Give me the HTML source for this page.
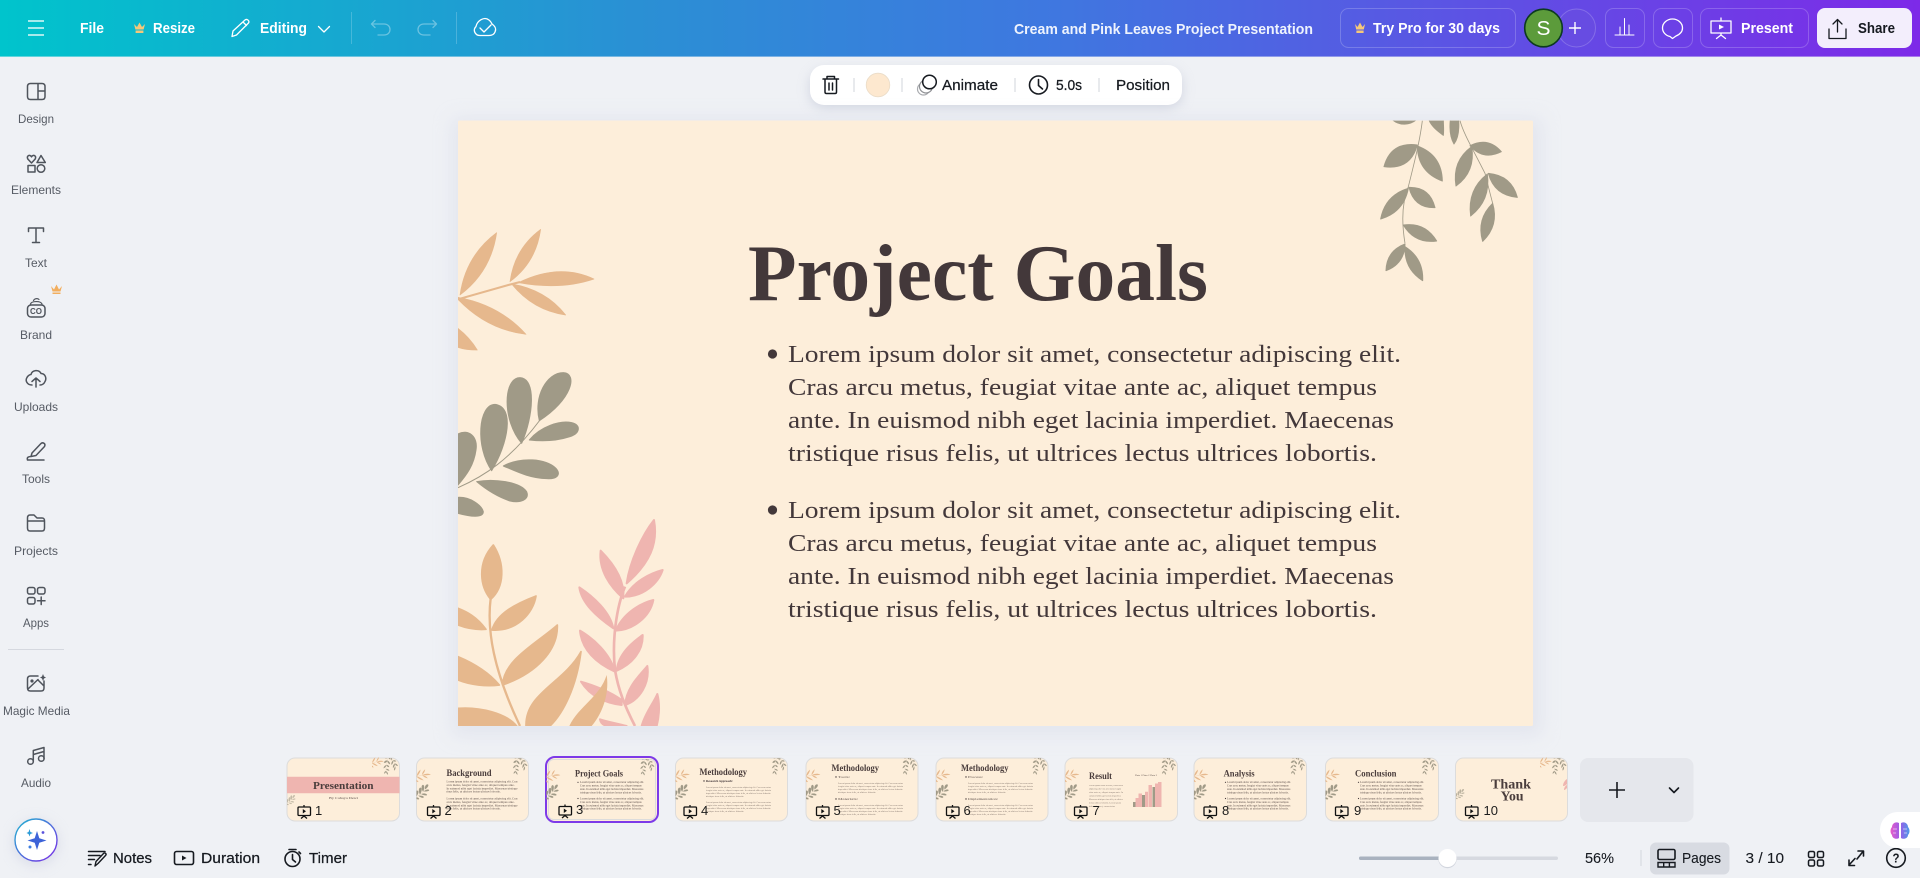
<!DOCTYPE html>
<html lang="en"><head><meta charset="utf-8"><title>Cream and Pink Leaves Project Presentation</title>
<style>
html,body{margin:0;padding:0;width:1920px;height:878px;overflow:hidden;background:#eff1f5}
svg{display:block;position:absolute;left:0;top:0}
text{font-family:"Liberation Sans",sans-serif}
.w{fill:#fff;font-size:15px;font-weight:700}
.side{fill:#565b64;font-size:12px}
.d{fill:#161a20;font-size:15px;stroke:#161a20;stroke-width:.25}
.serif{font-family:"Liberation Serif",serif;fill:#43383a}
.tt{font-family:"Liberation Serif",serif;fill:#4a3d3c;font-weight:700;font-size:9px}
.m{font-family:"Liberation Serif",serif;fill:#5f514c;font-size:2.9px}
.s{fill:none;stroke:#4f545c;stroke-width:1.5;stroke-linecap:round;stroke-linejoin:round}
.i{fill:none;stroke:#161a20;stroke-width:1.6;stroke-linecap:round;stroke-linejoin:round}
.h{fill:none;stroke:#fff;stroke-width:1.3;stroke-linecap:round;stroke-linejoin:round}
.n{fill:#1c1c1c;font-size:13px}
</style></head><body>
<svg width="1920" height="878" viewBox="0 0 1920 878" xmlns="http://www.w3.org/2000/svg">
<defs>
<linearGradient id="hg" x1="0" x2="1" y1="0" y2="0"><stop offset="0" stop-color="#00c4cc"/><stop offset=".33" stop-color="#2a90d4"/><stop offset=".55" stop-color="#3f77e0"/><stop offset="1" stop-color="#7d2ae8"/></linearGradient>
<linearGradient id="mg" x1="0" x2="1" y1="0" y2="1"><stop offset="0" stop-color="#1fb6d0"/><stop offset="1" stop-color="#7d2ae8"/></linearGradient>
<linearGradient id="bg" x1="0" x2="1" y1="0" y2="0"><stop offset="0" stop-color="#e85cc8"/><stop offset=".5" stop-color="#9a5ce8"/><stop offset="1" stop-color="#4d9be8"/></linearGradient>
<filter id="sh" x="-10%" y="-10%" width="120%" height="120%"><feGaussianBlur stdDeviation="9"/></filter>
<filter id="sh2" x="-20%" y="-50%" width="140%" height="220%"><feGaussianBlur stdDeviation="6"/></filter>
<clipPath id="cz"><rect x="24" y="0" width="1200" height="1548"/></clipPath>
<clipPath id="ct"><rect x="0" y="32" width="600" height="600"/></clipPath>
<g id="o1" transform="translate(450 210) scale(.33333)" fill="#e6b88d" stroke="#e6b88d" stroke-width="2" stroke-linejoin="round" clip-path="url(#cz)">
<path d="M24 268L175 225L210 216" fill="none" stroke-width="6"/>
<path d="M30 255C41 178 77 115 140 68C129 145 93 208 30 255Z"/>
<path d="M180 215C189 150 219 97 272 58C263 123 233 176 180 215Z"/>
<path d="M205 218C282 180 358 172 432 207C358 232 282 232 205 218Z"/>
<path d="M185 222C252 233 307 264 347 315C283 306 228 275 185 222Z"/>
<path d="M24 262C106 277 174 313 228 373C148 363 80 327 24 268Z"/>
<path d="M24 355C50 375 70 400 82 420C60 420 40 418 24 412Z"/>
</g>
<g id="g1" transform="translate(450 210) scale(.33333)" fill="#a09a87" stroke="#a09a87" stroke-width="3" stroke-linejoin="round" clip-path="url(#cz)">
<path d="M24 833C100 800 180 750 270 630" fill="none"/>
<path d="M268 632C250 560 290 488 340 488C385 490 365 570 268 632Z"/>
<path d="M215 700C155 630 160 503 210 503C260 505 250 620 215 700Z"/>
<path d="M125 782C75 710 85 583 135 583C195 590 175 700 125 782Z"/>
<path d="M24 825V672C55 655 85 680 78 720C72 765 50 795 24 825Z"/>
<path d="M238 690C270 650 330 630 365 638C395 645 390 670 360 680C320 693 280 695 238 690Z"/>
<path d="M160 768C210 740 290 745 318 775C335 795 320 808 290 806C240 805 200 785 160 768Z"/>
<path d="M80 815C130 805 210 815 230 845C240 870 210 880 180 873C140 860 110 840 80 815Z"/>
<path d="M24 862C60 860 95 885 100 905C100 925 60 920 24 910Z"/>
</g>
<g id="tr" transform="translate(1360 110) scale(.33333)" fill="#a09a87" stroke="#a09a87" stroke-width="3" stroke-linejoin="round" clip-path="url(#ct)">
<g fill="none" stroke-width="2.5"><path d="M187 32C180 90 165 150 145 230C125 280 125 340 135 400"/><path d="M300 32C310 70 340 120 375 190C385 230 390 250 398 280"/></g>
<path d="M98 30C120 48 150 45 168 30Z"/>
<path d="M207 30C215 50 235 65 250 76C252 60 250 45 250 30Z"/>
<path d="M271 30C268 60 272 85 282 102C295 85 298 60 296 30Z"/>
<path d="M172 105C120 98 86 119 72 170C124 177 158 156 172 105Z"/>
<path d="M172 108C221 126 246 161 247 213C198 195 173 160 172 108Z"/>
<path d="M145 235C98 249 71 279 62 327C109 313 136 283 145 235Z"/>
<path d="M147 232C189 231 215 252 225 293C183 294 157 273 147 232Z"/>
<path d="M130 345C173 339 207 355 230 393C187 399 153 383 130 345Z"/>
<path d="M135 402C98 416 79 442 78 482C115 468 134 442 135 402Z"/>
<path d="M135 410C173 434 190 468 188 512C150 488 133 454 135 410Z"/>
<path d="M330 107C366 89 398 95 424 125C388 143 356 137 330 107Z"/>
<path d="M335 110C295 139 280 179 288 228C328 199 343 159 335 110Z"/>
<path d="M382 192C341 224 325 266 332 318C373 286 389 244 382 192Z"/>
<path d="M385 190C431 194 460 218 472 262C426 258 397 234 385 190Z"/>
<path d="M398 280C365 312 355 350 368 394C401 362 411 324 398 280Z"/>
</g>
<g id="pp"><rect x="1" y="2.5" width="12.5" height="8.5" rx="1" fill="none" stroke="#111" stroke-width="1.3"/><path d="M7 .5V2.5M7 11V12M7 11.5L4 14M7 11.5L10 14" fill="none" stroke="#111" stroke-width="1.3"/><path d="M5.8 4.5L9 6.7L5.8 9Z" fill="#111"/></g>
</defs>

<rect width="1920" height="878" fill="#eff1f5"/>
<rect width="1920" height="56.6" fill="url(#hg)"/>

<!-- top bar left -->
<path d="M28 21H44M28 28H44M28 35H44" stroke="#dff7f7" stroke-width="1.5" fill="none"/>
<text class="w" x="80" y="33" textLength="24" lengthAdjust="spacingAndGlyphs">File</text>
<path d="M134 24L137 27L139.5 22.5L142 27L145 24L143.6 29.5H135.4Z M135.6 30.5H143.4V33H135.6Z" fill="#f5c87a"/>
<text class="w" x="153" y="33" textLength="42" lengthAdjust="spacingAndGlyphs">Resize</text>
<path class="h" d="M232 36.5L233 31L245 20C246.5 18.5 250 20.5 248.5 23L236.5 35ZM243 22L246.5 25.5"/>
<text class="w" x="260" y="33" textLength="47" lengthAdjust="spacingAndGlyphs">Editing</text>
<path class="h" d="M318.5 26.5L324 32L329.5 26.5"/>
<path d="M351.5 12V44M456.5 12V44" stroke="#fff" stroke-opacity=".2"/>
<path class="h" opacity=".35" d="M375 20.5L371.5 24L375 27.5M372 24H384C392 24 392 35 384 35H378"/>
<path class="h" opacity=".35" d="M433 20.5L436.5 24L433 27.5M436 24H424C416 24 416 35 424 35H430"/>
<path class="h" d="M480 35.5C475 35.5 472.5 30 476 26.5C477 21 484 16 489 20C491 21.5 491.5 23 492 24C495 26 496.5 29 495 32C494 34.5 492 35.5 489 35.5ZM480 28L484 32L491 25"/>

<!-- top bar right -->
<text class="w" x="1014" y="34" textLength="299" lengthAdjust="spacingAndGlyphs" style="font-size:15px;fill:#eef3fd">Cream and Pink Leaves Project Presentation</text>
<rect x="1340.5" y="8.5" width="175" height="39" rx="8" fill="none" stroke="#fff" stroke-opacity=".2"/>
<path d="M1355 24L1357.5 27L1360 22.5L1362.5 27L1365 24L1363.8 29.5H1356.2Z M1356.4 30.5H1363.6V33H1356.4Z" fill="#f5c87a"/>
<text class="w" x="1373" y="33" textLength="127" lengthAdjust="spacingAndGlyphs">Try Pro for 30 days</text>
<circle cx="1576.5" cy="28" r="19" fill="#6a4fe0" fill-opacity=".5" stroke="#fff" stroke-opacity=".2"/>
<path d="M1575 22V34M1569 28H1581" stroke="#fff" stroke-width="1.4"/>
<circle cx="1543.5" cy="28" r="18.8" fill="#5c9b3b" stroke="#0c3a20" stroke-width="1.6"/>
<text x="1536.5" y="35" style="font-size:20px;fill:#fff" textLength="14" lengthAdjust="spacingAndGlyphs">S</text>
<rect x="1605.5" y="8.5" width="39" height="39" rx="8" fill="none" stroke="#fff" stroke-opacity=".2"/>
<path class="h" style="stroke-width:1" d="M1615 35H1634M1620 35V27M1624.5 35V18.5M1629 35V25"/>
<rect x="1653.5" y="8.5" width="39" height="39" rx="8" fill="none" stroke="#fff" stroke-opacity=".2"/>
<path class="h" d="M1672.5 19C1678 19 1682.5 23 1682.5 28C1682.5 32 1679.5 34.5 1676 36L1672.5 38.5L1670 36.5C1665.5 35.5 1662.5 32 1662.5 28C1662.5 23 1667 19 1672.5 19Z"/>
<rect x="1700.5" y="8.5" width="108" height="39" rx="8" fill="none" stroke="#fff" stroke-opacity=".2"/>
<path class="h" d="M1711 21H1731V33H1711ZM1721 18V21M1721 33V35M1721 35L1716.5 38.5M1721 35L1725.5 38.5"/>
<path d="M1719 24.5L1724 27L1719 29.5Z" fill="#fff"/>
<text class="w" x="1741" y="33" textLength="52" lengthAdjust="spacingAndGlyphs">Present</text>
<rect x="1817" y="8" width="95" height="40" rx="8" fill="#f3eefc"/>
<path class="i" style="stroke-width:1.3" d="M1829 29V38.5H1846V29M1837.5 19.5V32M1833 24L1837.5 19.5L1842 24"/>
<text x="1858" y="33" textLength="37" lengthAdjust="spacingAndGlyphs" style="font-size:15px;font-weight:700;fill:#161a20">Share</text>

<!-- sidebar -->
<path class="s" d="M30.5 83.5H42C44 83.5 45 84.5 45 86.5V96.5C45 98.5 44 99.5 42 99.5H30.5C28.5 99.5 27.5 98.5 27.5 96.5V86.5C27.5 84.5 28.5 83.5 30.5 83.5ZM38 83.5V99.5M38 91H45"/>
<text class="side" x="18" y="123" textLength="36" lengthAdjust="spacingAndGlyphs">Design</text>
<path class="s" d="M31.5 163L27.8 159C26.5 156.5 28.5 155 30 155.5C30.7 155.7 31.2 156.2 31.5 156.8C31.8 156.2 32.3 155.7 33 155.5C34.5 155 36.5 156.5 35.2 159ZM41 155.5L45.3 162.5H37ZM28 165.5H35V172H28Z"/><circle class="s" cx="41" cy="168.5" r="3.8"/>
<text class="side" x="11" y="194" textLength="50" lengthAdjust="spacingAndGlyphs">Elements</text>
<path class="s" d="M28.5 231.5V228H43.5V231.5M36 228V242.5M32.5 242.5H39.5"/>
<text class="side" x="25" y="267" textLength="22" lengthAdjust="spacingAndGlyphs">Text</text>
<rect class="s" x="27.5" y="305" width="17.5" height="12" rx="3.5"/>
<path class="s" style="stroke-width:1.2" d="M30.5 304C31.5 301 40.5 300.5 42 304M33.5 300.5C34.5 298.5 37.5 298 39 299.5"/>
<text x="30" y="314" style="font-size:8px;font-weight:700;fill:#4f545c" textLength="12" lengthAdjust="spacingAndGlyphs">CO</text>
<path d="M51 286L54 289.5L56.5 284.5L59 289.5L62 286L60.5 291.5H52.5ZM52.5 292.5H60.5V294H52.5Z" fill="#f2ae5e"/>
<text class="side" x="20" y="339" textLength="32" lengthAdjust="spacingAndGlyphs">Brand</text>
<path class="s" d="M32 385C27 385 25 380.5 27 377.5C28 375.5 30 374.5 31 374.5C32 370 39 369 41 373.5C45 373.5 47 378 45 381.5C44 384 42 385 40 385M36 387V378M32 381.5L36 378L40 381.5"/>
<text class="side" x="14" y="411" textLength="44" lengthAdjust="spacingAndGlyphs">Uploads</text>
<path class="s" d="M32 453L40.5 444C42.5 441.5 46 443.5 44.5 446.5L36 455.5L31 456.5ZM27.5 460C26.5 457 29 456.5 31 456.5M27.5 460H44"/>
<text class="side" x="22" y="483" textLength="28" lengthAdjust="spacingAndGlyphs">Tools</text>
<path class="s" d="M27.5 518C27.5 516 28.5 515 30 515H34L37 518H42C44 518 44.5 519 44.5 521V528C44.5 530 43.5 531 42 531H30C28.5 531 27.5 530 27.5 528ZM27.5 521H44.5"/>
<text class="side" x="14" y="555" textLength="44" lengthAdjust="spacingAndGlyphs">Projects</text>
<rect class="s" x="27.5" y="587.5" width="7.5" height="6.5" rx="2"/><rect class="s" x="37.5" y="587.5" width="7.5" height="6.5" rx="2"/><rect class="s" x="27.5" y="597.5" width="7.5" height="6.5" rx="2"/>
<path class="s" d="M41.2 597V604.5M37.5 600.8H45"/>
<text class="side" x="23" y="627" textLength="26" lengthAdjust="spacingAndGlyphs">Apps</text>
<rect x="8" y="649" width="56" height="1" fill="#d5d8df"/>
<path class="s" d="M38 676H30.5C28.5 676 27.5 677 27.5 679V688C27.5 690 28.5 691 30.5 691H41C43 691 44 690 44 688V681M28 689L38 679.5M38 680L44 686"/>
<circle cx="32" cy="681" r="1.6" fill="#4f545c"/>
<path d="M43 674L44 676.5L46 677.5L44 678.5L43 681L42 678.5L40 677.5L42 676.5Z" fill="#4f545c"/>
<text class="side" x="3" y="715" textLength="67" lengthAdjust="spacingAndGlyphs">Magic Media</text>
<circle class="s" cx="30.5" cy="761.5" r="2.8"/><circle class="s" cx="41.3" cy="758.5" r="2.8"/>
<path class="s" d="M33.3 761.5V750.5L44 747.5V758.5M33.3 754.5L44 751.5"/>
<text class="side" x="21" y="787" textLength="30" lengthAdjust="spacingAndGlyphs">Audio</text>
<circle cx="36" cy="843" r="23" fill="#c9cde0" opacity=".5" filter="url(#sh2)"/>
<circle cx="36" cy="840" r="21" fill="#fff" stroke="url(#mg)" stroke-width="1.4"/>
<path d="M37 831L39.3 838.2L46.5 840.5L39.3 842.8L37 850L34.7 842.8L27.5 840.5L34.7 838.2Z" fill="#3d63d8"/>
<path d="M29.5 829L30.4 832L33 833L30.4 834L29.5 836.5L28.6 834L26.5 833L28.6 832Z" fill="#2b9ad6"/>
<circle cx="43" cy="832.5" r="1.4" fill="#5a52dc"/><circle cx="30" cy="847" r="1.5" fill="#3c7de0"/>

<!-- bottom left -->
<path class="i" style="stroke-width:1.5" d="M88.5 851.5H105M88.5 855.5H100M88.5 859.5H94.5M88.5 864.5H91"/>
<path class="i" style="stroke-width:1.4" d="M95 866L96 861.5L103.5 853.5C105 852 107 854 105.5 855.5L98 863.5Z"/>
<text class="d" x="113" y="863" textLength="39" lengthAdjust="spacingAndGlyphs">Notes</text>
<rect class="i" x="174.5" y="851.5" width="19" height="13" rx="2"/><path d="M182 855.5L186.5 858L182 860.5Z" fill="#161a20"/>
<text class="d" x="201" y="863" textLength="59" lengthAdjust="spacingAndGlyphs">Duration</text>
<circle class="i" cx="292.5" cy="859" r="7.5"/><path class="i" d="M289 849.5H296M292.5 854.5V859.5L295.5 862M299 852L300.5 853.5"/>
<text class="d" x="309" y="863" textLength="38" lengthAdjust="spacingAndGlyphs">Timer</text>

<!-- floating toolbar -->
<rect x="810" y="70" width="372" height="38" rx="14" fill="#b8bdcf" opacity=".55" filter="url(#sh2)"/>
<rect x="810" y="65" width="372" height="40" rx="14" fill="#fff"/>
<path class="i" style="stroke-width:1.5" d="M823 79H838.5M827 79V76.5H834.5V79M825 79V92C825 93 825.7 93.5 826.5 93.5H835C835.8 93.5 836.5 93 836.5 92V79M829 83V90M832.5 83V90"/>
<path d="M854 78V92M902 78V92M1015 78V92M1099 78V92" stroke="#d9dbe1" stroke-width="1.2"/>
<circle cx="878" cy="85" r="11.8" fill="#fde8cf" stroke="#eadcc8" stroke-width=".8"/>
<circle cx="923.5" cy="89" r="6" fill="none" stroke="#a9abaf" stroke-width="1.2"/><circle cx="926" cy="86.5" r="6.5" fill="#fff" stroke="#8f9195" stroke-width="1.2"/>
<circle cx="929.5" cy="82" r="6.8" fill="#fff" stroke="#161a20" stroke-width="1.5"/>
<text class="d" x="942" y="90" textLength="56" lengthAdjust="spacingAndGlyphs">Animate</text>
<circle class="i" cx="1038.5" cy="85" r="9"/><path class="i" d="M1038.5 79.5V85.5L1042.5 89"/>
<text class="d" x="1056" y="90" textLength="26" lengthAdjust="spacingAndGlyphs">5.0s</text>
<text class="d" x="1116" y="90" textLength="54" lengthAdjust="spacingAndGlyphs">Position</text>

<!-- main slide -->
<rect x="452" y="118" width="1090" height="618" fill="#d8dbe8" opacity=".5" filter="url(#sh)"/>
<rect x="458" y="120.5" width="1075" height="605.5" rx="1.5" fill="#fdeeda"/>
<use href="#o1"/><use href="#g1"/><use href="#tr"/>
<g transform="translate(450 210) scale(.33333)" clip-path="url(#cz)">
<g fill="#e6b88d" stroke="#e6b88d" stroke-width="5" stroke-linejoin="round">
<path d="M122 1165C110 1260 130 1380 210 1548" fill="none" stroke-width="7"/>
<path d="M122 1168C90 1130 80 1060 130 1005C165 1060 165 1130 122 1168Z"/>
<path d="M108 1258C80 1220 50 1205 24 1195V1245C50 1255 80 1260 108 1258Z"/>
<path d="M126 1260C140 1210 200 1180 258 1158C250 1210 200 1265 126 1260Z"/>
<path d="M158 1425C160 1350 260 1300 322 1245C325 1320 260 1390 158 1425Z"/>
<path d="M148 1425C110 1380 60 1355 24 1340V1410C60 1425 110 1430 148 1425Z"/>
<path d="M228 1548C225 1450 340 1420 393 1325C380 1430 340 1510 300 1548Z"/>
<path d="M24 1495C90 1490 170 1510 200 1548H24Z"/>
</g>
<g fill="#efb5b0" stroke="#efb5b0" stroke-width="6" stroke-linejoin="round">
<path d="M525 1130C500 1190 485 1290 495 1380C505 1440 525 1490 555 1548" fill="none" stroke-width="8"/>
<path d="M530 1120C540 1050 580 970 612 930C625 1000 600 1060 530 1120Z"/>
<path d="M525 1160C550 1115 600 1090 638 1080C625 1120 580 1160 525 1160Z"/>
<path d="M520 1165C480 1130 445 1080 452 1022C490 1060 525 1110 520 1165Z"/>
<path d="M497 1262C520 1210 570 1180 610 1170C600 1220 550 1260 497 1262Z"/>
<path d="M490 1255C440 1220 395 1180 388 1132C430 1160 480 1205 490 1255Z"/>
<path d="M500 1382C505 1330 550 1295 578 1275C580 1320 550 1360 500 1382Z"/>
<path d="M495 1385C440 1360 395 1320 390 1262C430 1285 480 1330 495 1385Z"/>
<path d="M525 1485C530 1430 570 1395 592 1368C600 1420 570 1470 525 1485Z"/>
<path d="M515 1485C470 1480 420 1460 393 1415C430 1425 480 1445 515 1470Z"/>
<path d="M575 1548C585 1510 610 1480 622 1452C632 1490 625 1530 620 1548Z"/>
<path d="M530 1548C500 1540 470 1535 450 1528C452 1540 460 1545 470 1548Z"/>
</g>
<path d="M358 1548C385 1490 450 1460 470 1395C480 1460 450 1520 425 1548Z" fill="#e6b88d"/>
</g>
<text class="serif" x="748" y="300" textLength="460" lengthAdjust="spacingAndGlyphs" style="font-size:81px;font-weight:700">Project Goals</text>
<g class="serif" style="font-size:24px">
<circle cx="772.5" cy="354" r="4.6" fill="#43383a"/>
<text class="serif" x="788" y="362" textLength="613" lengthAdjust="spacingAndGlyphs">Lorem ipsum dolor sit amet, consectetur adipiscing elit.</text>
<text class="serif" x="788" y="395" textLength="589" lengthAdjust="spacingAndGlyphs">Cras arcu metus, feugiat vitae ante ac, aliquet tempus</text>
<text class="serif" x="788" y="428" textLength="606" lengthAdjust="spacingAndGlyphs">ante. In euismod nibh eget lacinia imperdiet. Maecenas</text>
<text class="serif" x="788" y="461" textLength="589" lengthAdjust="spacingAndGlyphs">tristique risus felis, ut ultrices lectus ultrices lobortis.</text>
<circle cx="772.5" cy="510" r="4.6" fill="#43383a"/>
<text class="serif" x="788" y="518" textLength="613" lengthAdjust="spacingAndGlyphs">Lorem ipsum dolor sit amet, consectetur adipiscing elit.</text>
<text class="serif" x="788" y="551" textLength="589" lengthAdjust="spacingAndGlyphs">Cras arcu metus, feugiat vitae ante ac, aliquet tempus</text>
<text class="serif" x="788" y="584" textLength="606" lengthAdjust="spacingAndGlyphs">ante. In euismod nibh eget lacinia imperdiet. Maecenas</text>
<text class="serif" x="788" y="617" textLength="589" lengthAdjust="spacingAndGlyphs">tristique risus felis, ut ultrices lectus ultrices lobortis.</text>
</g>

<!-- thumb 1 -->
<rect x="287" y="758" width="112.5" height="63" rx="8" fill="#fdeeda" stroke="#dcdcdc"/>
<path d="M287 776.7H399.5V793.3H287Z" fill="#efb5b0"/>
<g transform="translate(287 758) scale(.10465) translate(-458 -121)"><use href="#tr"/></g>
<g transform="translate(372 757) scale(.085) translate(-458 -228)"><use href="#o1"/></g>
<g transform="translate(287 795) scale(.07) translate(-458 -372)" opacity=".6"><use href="#g1"/></g>
<text class="tt" x="313" y="789" textLength="60.5" lengthAdjust="spacingAndGlyphs" style="font-size:11px">Presentation</text>
<text class="m" x="329" y="799" textLength="29" lengthAdjust="spacingAndGlyphs">By Cahaya Dewi</text>
<use href="#pp" x="297" y="804.5"/><text class="n" x="315" y="815">1</text>

<!-- thumb 2 -->
<rect x="416.5" y="758" width="112" height="63" rx="8" fill="#fdeeda" stroke="#dcdcdc"/>
<g transform="translate(416.5 758) scale(.10465) translate(-458 -121)"><use href="#o1"/><use href="#g1"/><use href="#tr"/></g>
<text class="tt" x="446.5" y="776" textLength="45" lengthAdjust="spacingAndGlyphs">Background</text>
<text class="m" x="446.5" y="782.5" textLength="71" lengthAdjust="spacingAndGlyphs">Lorem ipsum dolor sit amet, consectetur adipiscing elit. Cras</text>
<text class="m" x="446.5" y="785.9" textLength="68" lengthAdjust="spacingAndGlyphs">arcu metus, feugiat vitae ante ac, aliquet tempus ante.</text>
<text class="m" x="446.5" y="789.3" textLength="71" lengthAdjust="spacingAndGlyphs">In euismod nibh eget lacinia imperdiet. Maecenas tristique</text>
<text class="m" x="446.5" y="792.7" textLength="54" lengthAdjust="spacingAndGlyphs">risus felis, ut ultrices lectus ultrices lobortis.</text>
<text class="m" x="446.5" y="799.5" textLength="71" lengthAdjust="spacingAndGlyphs">Lorem ipsum dolor sit amet, consectetur adipiscing elit. Cras</text>
<text class="m" x="446.5" y="802.9" textLength="68" lengthAdjust="spacingAndGlyphs">arcu metus, feugiat vitae ante ac, aliquet tempus ante.</text>
<text class="m" x="446.5" y="806.3" textLength="71" lengthAdjust="spacingAndGlyphs">In euismod nibh eget lacinia imperdiet. Maecenas tristique</text>
<text class="m" x="446.5" y="809.7" textLength="54" lengthAdjust="spacingAndGlyphs">risus felis, ut ultrices lectus ultrices lobortis.</text>
<use href="#pp" x="426.5" y="804.5"/><text class="n" x="444.5" y="815">2</text>

<!-- thumb 3 selected -->
<rect x="546" y="757" width="112" height="65" rx="9" fill="#fdeeda" stroke="#7d3ae8" stroke-width="2"/>
<rect x="548.5" y="759.5" width="107" height="60" rx="5" fill="#fdeeda" stroke="#dcdcdc"/>
<g transform="translate(546.3 759) scale(.102) translate(-458 -121)"><use href="#o1"/><use href="#g1"/><use href="#tr"/></g>
<text class="tt" x="575" y="776.7" textLength="48" lengthAdjust="spacingAndGlyphs">Project Goals</text>
<circle cx="578" cy="782.3" r=".6" fill="#43383a"/><circle cx="578" cy="798.5" r=".6" fill="#43383a"/>
<text class="m" x="580" y="783.2" textLength="64" lengthAdjust="spacingAndGlyphs">Lorem ipsum dolor sit amet, consectetur adipiscing elit.</text>
<text class="m" x="580" y="786.6" textLength="61.6" lengthAdjust="spacingAndGlyphs">Cras arcu metus, feugiat vitae ante ac, aliquet tempus</text>
<text class="m" x="580" y="790" textLength="63.4" lengthAdjust="spacingAndGlyphs">ante. In euismod nibh eget lacinia imperdiet. Maecenas</text>
<text class="m" x="580" y="793.4" textLength="61.6" lengthAdjust="spacingAndGlyphs">tristique risus felis, ut ultrices lectus ultrices lobortis.</text>
<text class="m" x="580" y="799.5" textLength="64" lengthAdjust="spacingAndGlyphs">Lorem ipsum dolor sit amet, consectetur adipiscing elit.</text>
<text class="m" x="580" y="802.9" textLength="61.6" lengthAdjust="spacingAndGlyphs">Cras arcu metus, feugiat vitae ante ac, aliquet tempus</text>
<text class="m" x="580" y="806.3" textLength="63.4" lengthAdjust="spacingAndGlyphs">ante. In euismod nibh eget lacinia imperdiet. Maecenas</text>
<text class="m" x="580" y="809.7" textLength="61.6" lengthAdjust="spacingAndGlyphs">tristique risus felis, ut ultrices lectus ultrices lobortis.</text>
<use href="#pp" x="558" y="804"/><text class="n" x="576" y="814">3</text>

<!-- thumb 4 -->
<rect x="675.5" y="758" width="112" height="63" rx="8" fill="#fdeeda" stroke="#dcdcdc"/>
<g transform="translate(675.5 758) scale(.10465) translate(-458 -121)"><use href="#o1"/><use href="#g1"/><use href="#tr"/></g>
<text class="tt" x="699.5" y="775" textLength="47.5" lengthAdjust="spacingAndGlyphs">Methodology</text>
<circle cx="704" cy="781" r=".7" fill="#43383a"/>
<text class="m" x="706" y="782" textLength="27" lengthAdjust="spacingAndGlyphs" style="font-weight:700;fill:#43383a">Research Approach:</text>
<g style="opacity:.75">
<text class="m" x="706" y="788" textLength="65" lengthAdjust="spacingAndGlyphs" style="font-size:2px">Lorem ipsum dolor sit amet, consectetur adipiscing elit. Cras arcu metus</text>
<text class="m" x="706" y="791" textLength="65" lengthAdjust="spacingAndGlyphs" style="font-size:2px">feugiat vitae ante ac, aliquet tempus ante. In euismod nibh eget lacinia</text>
<text class="m" x="706" y="794" textLength="65" lengthAdjust="spacingAndGlyphs" style="font-size:2px">imperdiet. Maecenas tristique risus felis, ut ultrices lectus lobortis.</text>
<text class="m" x="706" y="797" textLength="38" lengthAdjust="spacingAndGlyphs" style="font-size:2px">tristique risus felis, ut ultrices lobortis.</text>
<text class="m" x="706" y="803" textLength="65" lengthAdjust="spacingAndGlyphs" style="font-size:2px">Lorem ipsum dolor sit amet, consectetur adipiscing elit. Cras arcu metus</text>
<text class="m" x="706" y="806" textLength="65" lengthAdjust="spacingAndGlyphs" style="font-size:2px">feugiat vitae ante ac, aliquet tempus ante. In euismod nibh eget lacinia</text>
<text class="m" x="706" y="809" textLength="65" lengthAdjust="spacingAndGlyphs" style="font-size:2px">imperdiet. Maecenas tristique risus felis, ut ultrices lectus lobortis.</text>
<text class="m" x="706" y="812" textLength="38" lengthAdjust="spacingAndGlyphs" style="font-size:2px">tristique risus felis, ut ultrices lobortis.</text>
</g>
<use href="#pp" x="683" y="804.5"/><text class="n" x="701" y="815">4</text>

<!-- thumb 5 -->
<rect x="806" y="758" width="112" height="63" rx="8" fill="#fdeeda" stroke="#dcdcdc"/>
<g transform="translate(806 758) scale(.10465) translate(-458 -121)"><use href="#o1"/><use href="#g1"/><use href="#tr"/></g>
<text class="tt" x="831.5" y="771" textLength="47.5" lengthAdjust="spacingAndGlyphs">Methodology</text>
<circle cx="836" cy="777" r=".7" fill="#43383a"/>
<text class="m" x="838" y="778" textLength="12" lengthAdjust="spacingAndGlyphs">Tools:</text>
<g style="opacity:.75">
<text class="m" x="838" y="784" textLength="65" lengthAdjust="spacingAndGlyphs" style="font-size:2px">Lorem ipsum dolor sit amet, consectetur adipiscing elit. Cras arcu metus</text>
<text class="m" x="838" y="787" textLength="65" lengthAdjust="spacingAndGlyphs" style="font-size:2px">feugiat vitae ante ac, aliquet tempus ante. In euismod nibh eget lacinia</text>
<text class="m" x="838" y="790" textLength="65" lengthAdjust="spacingAndGlyphs" style="font-size:2px">imperdiet. Maecenas tristique risus felis, ut ultrices lectus lobortis.</text>
<text class="m" x="838" y="793" textLength="38" lengthAdjust="spacingAndGlyphs" style="font-size:2px">tristique risus felis, ut ultrices lobortis.</text>
</g>
<circle cx="836" cy="799" r=".7" fill="#43383a"/>
<text class="m" x="838" y="800" textLength="20" lengthAdjust="spacingAndGlyphs">Materials:</text>
<g style="opacity:.75">
<text class="m" x="838" y="806" textLength="65" lengthAdjust="spacingAndGlyphs" style="font-size:2px">Lorem ipsum dolor sit amet, consectetur adipiscing elit. Cras arcu metus</text>
<text class="m" x="838" y="809" textLength="65" lengthAdjust="spacingAndGlyphs" style="font-size:2px">feugiat vitae ante ac, aliquet tempus ante. In euismod nibh eget lacinia</text>
<text class="m" x="838" y="812" textLength="65" lengthAdjust="spacingAndGlyphs" style="font-size:2px">imperdiet. Maecenas tristique risus felis, ut ultrices lectus lobortis.</text>
<text class="m" x="838" y="815" textLength="38" lengthAdjust="spacingAndGlyphs" style="font-size:2px">tristique risus felis, ut ultrices lobortis.</text>
</g>
<use href="#pp" x="815.5" y="804.5"/><text class="n" x="833.5" y="815">5</text>

<!-- thumb 6 -->
<rect x="936" y="758" width="112" height="63" rx="8" fill="#fdeeda" stroke="#dcdcdc"/>
<g transform="translate(936 758) scale(.10465) translate(-458 -121)"><use href="#o1"/><use href="#g1"/><use href="#tr"/></g>
<text class="tt" x="961" y="771" textLength="47.5" lengthAdjust="spacingAndGlyphs">Methodology</text>
<circle cx="966" cy="777" r=".7" fill="#43383a"/>
<text class="m" x="968" y="778" textLength="15" lengthAdjust="spacingAndGlyphs">Process:</text>
<g style="opacity:.75">
<text class="m" x="968" y="784" textLength="65" lengthAdjust="spacingAndGlyphs" style="font-size:2px">Lorem ipsum dolor sit amet, consectetur adipiscing elit. Cras arcu metus</text>
<text class="m" x="968" y="787" textLength="65" lengthAdjust="spacingAndGlyphs" style="font-size:2px">feugiat vitae ante ac, aliquet tempus ante. In euismod nibh eget lacinia</text>
<text class="m" x="968" y="790" textLength="65" lengthAdjust="spacingAndGlyphs" style="font-size:2px">imperdiet. Maecenas tristique risus felis, ut ultrices lectus lobortis.</text>
<text class="m" x="968" y="793" textLength="38" lengthAdjust="spacingAndGlyphs" style="font-size:2px">tristique risus felis, ut ultrices lobortis.</text>
</g>
<circle cx="966" cy="799" r=".7" fill="#43383a"/>
<text class="m" x="968" y="800" textLength="30" lengthAdjust="spacingAndGlyphs">Implementation:</text>
<g style="opacity:.75">
<text class="m" x="968" y="806" textLength="65" lengthAdjust="spacingAndGlyphs" style="font-size:2px">Lorem ipsum dolor sit amet, consectetur adipiscing elit. Cras arcu metus</text>
<text class="m" x="968" y="809" textLength="65" lengthAdjust="spacingAndGlyphs" style="font-size:2px">feugiat vitae ante ac, aliquet tempus ante. In euismod nibh eget lacinia</text>
<text class="m" x="968" y="812" textLength="65" lengthAdjust="spacingAndGlyphs" style="font-size:2px">imperdiet. Maecenas tristique risus felis, ut ultrices lectus lobortis.</text>
<text class="m" x="968" y="815" textLength="38" lengthAdjust="spacingAndGlyphs" style="font-size:2px">tristique risus felis, ut ultrices lobortis.</text>
</g>
<use href="#pp" x="945.5" y="804.5"/><text class="n" x="963.5" y="815">6</text>

<!-- thumb 7 -->
<rect x="1065" y="758" width="112.5" height="63" rx="8" fill="#fdeeda" stroke="#dcdcdc"/>
<g transform="translate(1065 758) scale(.10465) translate(-458 -121)"><use href="#o1"/><use href="#g1"/><use href="#tr"/></g>
<text class="tt" x="1089" y="779" textLength="23" lengthAdjust="spacingAndGlyphs">Result</text>
<g style="opacity:.75">
<text class="m" x="1089" y="786" textLength="34" lengthAdjust="spacingAndGlyphs" style="font-size:2px">Lorem ipsum dolor sit amet, consectetur</text>
<text class="m" x="1089" y="789.5" textLength="32" lengthAdjust="spacingAndGlyphs" style="font-size:2px">adipiscing elit. Cras arcu metus feugiat</text>
<text class="m" x="1089" y="793" textLength="34" lengthAdjust="spacingAndGlyphs" style="font-size:2px">vitae ante ac, aliquet tempus ante. In</text>
<text class="m" x="1089" y="796.5" textLength="32" lengthAdjust="spacingAndGlyphs" style="font-size:2px">euismod nibh eget lacinia imperdiet.</text>
<text class="m" x="1089" y="800" textLength="34" lengthAdjust="spacingAndGlyphs" style="font-size:2px">Maecenas tristique risus felis, ut ultrices</text>
<text class="m" x="1089" y="803.5" textLength="32" lengthAdjust="spacingAndGlyphs" style="font-size:2px">lectus ultrices lobortis. Lorem ipsum</text>
<text class="m" x="1089" y="807" textLength="26" lengthAdjust="spacingAndGlyphs" style="font-size:2px">dolor sit amet, consectetur</text>
</g>
<text class="m" x="1135" y="776" textLength="22" lengthAdjust="spacingAndGlyphs" style="font-size:2px">Data 1 Data 2 Data 3</text>
<path d="M1133 807V802H1135.5V807ZM1142 807V795H1145V807ZM1152.5 807V787H1155V807Z" fill="#a09a87"/>
<path d="M1135.5 807V798H1138.5V807ZM1138.5 807V793.5H1142V807ZM1145 807V791.7H1148V807ZM1148.5 807V785H1152V807ZM1155 807V783.5H1158V807ZM1158 807V782H1161.5V807Z" fill="#efb5b0"/>
<use href="#pp" x="1073.5" y="804.5"/><text class="n" x="1092.5" y="815">7</text>

<!-- thumb 8 -->
<rect x="1194" y="758" width="112.5" height="63" rx="8" fill="#fdeeda" stroke="#dcdcdc"/>
<g transform="translate(1194 758) scale(.10465) translate(-458 -121)"><use href="#o1"/><use href="#g1"/><use href="#tr"/></g>
<text class="tt" x="1223.6" y="776.7" textLength="31" lengthAdjust="spacingAndGlyphs">Analysis</text>
<circle cx="1225.5" cy="782.3" r=".6" fill="#43383a"/><circle cx="1225.5" cy="798.5" r=".6" fill="#43383a"/>
<text class="m" x="1227" y="783.2" textLength="64" lengthAdjust="spacingAndGlyphs">Lorem ipsum dolor sit amet, consectetur adipiscing elit.</text>
<text class="m" x="1227" y="786.6" textLength="61.6" lengthAdjust="spacingAndGlyphs">Cras arcu metus, feugiat vitae ante ac, aliquet tempus</text>
<text class="m" x="1227" y="790" textLength="63.4" lengthAdjust="spacingAndGlyphs">ante. In euismod nibh eget lacinia imperdiet. Maecenas</text>
<text class="m" x="1227" y="793.4" textLength="61.6" lengthAdjust="spacingAndGlyphs">tristique risus felis, ut ultrices lectus ultrices lobortis.</text>
<text class="m" x="1227" y="799.5" textLength="64" lengthAdjust="spacingAndGlyphs">Lorem ipsum dolor sit amet, consectetur adipiscing elit.</text>
<text class="m" x="1227" y="802.9" textLength="61.6" lengthAdjust="spacingAndGlyphs">Cras arcu metus, feugiat vitae ante ac, aliquet tempus</text>
<text class="m" x="1227" y="806.3" textLength="63.4" lengthAdjust="spacingAndGlyphs">ante. In euismod nibh eget lacinia imperdiet. Maecenas</text>
<text class="m" x="1227" y="809.7" textLength="61.6" lengthAdjust="spacingAndGlyphs">tristique risus felis, ut ultrices lectus ultrices lobortis.</text>
<use href="#pp" x="1203" y="804.5"/><text class="n" x="1222" y="815">8</text>

<!-- thumb 9 -->
<rect x="1325.5" y="758" width="113" height="63" rx="8" fill="#fdeeda" stroke="#dcdcdc"/>
<g transform="translate(1325.5 758) scale(.10465) translate(-458 -121)"><use href="#o1"/><use href="#g1"/><use href="#tr"/></g>
<text class="tt" x="1355" y="776.7" textLength="41.5" lengthAdjust="spacingAndGlyphs">Conclusion</text>
<circle cx="1358.5" cy="782.3" r=".6" fill="#43383a"/><circle cx="1358.5" cy="798.5" r=".6" fill="#43383a"/>
<text class="m" x="1360" y="783.2" textLength="64" lengthAdjust="spacingAndGlyphs">Lorem ipsum dolor sit amet, consectetur adipiscing elit.</text>
<text class="m" x="1360" y="786.6" textLength="61.6" lengthAdjust="spacingAndGlyphs">Cras arcu metus, feugiat vitae ante ac, aliquet tempus</text>
<text class="m" x="1360" y="790" textLength="63.4" lengthAdjust="spacingAndGlyphs">ante. In euismod nibh eget lacinia imperdiet. Maecenas</text>
<text class="m" x="1360" y="793.4" textLength="61.6" lengthAdjust="spacingAndGlyphs">tristique risus felis, ut ultrices lectus ultrices lobortis.</text>
<text class="m" x="1360" y="799.5" textLength="64" lengthAdjust="spacingAndGlyphs">Lorem ipsum dolor sit amet, consectetur adipiscing elit.</text>
<text class="m" x="1360" y="802.9" textLength="61.6" lengthAdjust="spacingAndGlyphs">Cras arcu metus, feugiat vitae ante ac, aliquet tempus</text>
<text class="m" x="1360" y="806.3" textLength="63.4" lengthAdjust="spacingAndGlyphs">ante. In euismod nibh eget lacinia imperdiet. Maecenas</text>
<text class="m" x="1360" y="809.7" textLength="61.6" lengthAdjust="spacingAndGlyphs">tristique risus felis, ut ultrices lectus ultrices lobortis.</text>
<use href="#pp" x="1334.5" y="804.5"/><text class="n" x="1354" y="815">9</text>

<!-- thumb 10 -->
<rect x="1455.5" y="758" width="112" height="63" rx="8" fill="#fdeeda" stroke="#dcdcdc"/>
<g transform="translate(1455.5 758) scale(.10465) translate(-458 -121)"><use href="#tr"/></g>
<g transform="translate(1540 757) scale(.085) translate(-458 -228)"><use href="#o1"/></g>
<g transform="translate(1456 789) scale(.07) translate(-458 -372)" opacity=".7"><use href="#g1"/></g>
<path d="M1567 779C1564 781 1563 784 1563 786C1565 786 1566 785 1567 784ZM1567 785C1565 786 1564 788 1564 790C1565 790 1566 789 1567 788Z" fill="#efb5b0"/>
<text class="tt" x="1491" y="788.7" textLength="40" lengthAdjust="spacingAndGlyphs" style="font-size:14px">Thank</text>
<text class="tt" x="1500.6" y="800.7" textLength="23" lengthAdjust="spacingAndGlyphs" style="font-size:14px">You</text>
<use href="#pp" x="1464.5" y="804.5"/><text class="n" x="1483.5" y="815">10</text>

<!-- add page -->
<rect x="1580" y="758" width="113.5" height="64" rx="8" fill="#e5e7ec"/>
<path d="M1617 782V798M1609 790H1625" stroke="#161a20" stroke-width="1.6"/>
<path class="i" d="M1669.5 788L1674 792.5L1678.5 788"/>

<!-- bottom right -->
<rect x="1359" y="856.5" width="199" height="3.5" rx="1.7" fill="#d6d9e0"/>
<rect x="1359" y="856.5" width="89" height="3.5" rx="1.7" fill="#a9b2bf"/>
<circle cx="1447.5" cy="859" r="9.2" fill="#c6cad4" opacity=".7"/><circle cx="1447.5" cy="858" r="9" fill="#fff"/>
<text class="d" x="1585" y="863" textLength="29" lengthAdjust="spacingAndGlyphs" style="stroke-width:.1">56%</text>
<path d="M1641 850V866" stroke="#d3d6dd"/>
<rect x="1650" y="842.5" width="79.5" height="32" rx="6" fill="#d8dbe2"/>
<rect class="i" x="1658" y="849.5" width="17" height="10" rx="1.5"/><path d="M1658 862.5H1675V867H1658ZM1663.7 862.5V867M1669.4 862.5V867" fill="none" stroke="#161a20" stroke-width="1.4"/>
<text class="d" x="1682" y="863" textLength="39" lengthAdjust="spacingAndGlyphs" style="stroke-width:.1">Pages</text>
<text class="d" x="1745.5" y="863" textLength="38.5" lengthAdjust="spacingAndGlyphs" style="stroke-width:.1">3 / 10</text>
<g class="i" style="stroke-width:1.5"><rect x="1808.5" y="851.5" width="6" height="6" rx="1.5"/><rect x="1817.5" y="851.5" width="6" height="6" rx="1.5"/><rect x="1808.5" y="860" width="6" height="6" rx="1.5"/><rect x="1817.5" y="860" width="6" height="6" rx="1.5"/></g>
<path class="i" d="M1857 859L1863 851.5M1858 851H1863.5V856M1855 858.5L1849 865M1849 860V865.5H1854.5"/>
<circle class="i" cx="1896" cy="858" r="9.3"/>
<text x="1892.5" y="862.5" textLength="7" lengthAdjust="spacingAndGlyphs" style="font-size:12.5px;font-weight:700;fill:#161a20">?</text>
<path d="M1920 812H1898C1888 812 1880 820 1880 830C1880 840 1888 848 1898 848H1920Z" fill="#fff"/>
<path d="M1899 823C1895 821 1892 824 1892 827C1890 829 1890 833 1892 835C1892 838 1896 840 1899 838ZM1901 823C1905 821 1908 824 1908 827C1910 829 1910 833 1908 835C1908 838 1904 840 1901 838Z" fill="url(#bg)"/>
<path d="M1893 829H1897M1893 833H1896M1903 829H1907M1904 833H1907" stroke="#fff" stroke-width=".7" stroke-opacity=".7"/>
</svg>
</body></html>
